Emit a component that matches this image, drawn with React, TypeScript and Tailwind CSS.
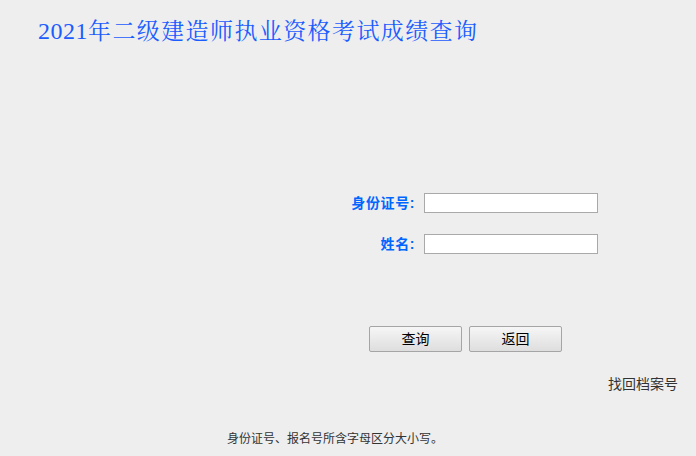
export default function App() {
  return (
    <div className="w-[696px] h-[456px] bg-[#eeeeee] overflow-hidden" style={{ fontFamily: '"Liberation Sans", "Noto Sans CJK SC", sans-serif' }}>
      <div className="pt-[16px] pl-[38px] h-[46px] leading-[30px] text-[#1a5cff] whitespace-nowrap" style={{ fontFamily: '"Liberation Serif", "Noto Serif CJK SC", "Noto Sans CJK SC", serif' }}>
        <span className="text-[24px] leading-[30px] tracking-[0.5px]">2021</span>
        <span className="text-[23px] leading-[30px] tracking-[1.4px]">年二级建造师执业资格考试成绩查询</span>
      </div>
      <div className="mt-[147px] flex flex-col gap-[21px]">
        <div className="flex items-center">
          <div className="w-[415px] text-right text-[14px] leading-[20px] font-bold tracking-[0.6px] text-[#0066ff]">身份证号:</div>
          <input className="ml-[9px] w-[174px] h-[20px] bg-white border border-[#a9a9a9] outline-none" />
        </div>
        <div className="flex items-center">
          <div className="w-[415px] text-right text-[14px] leading-[20px] font-bold tracking-[0.6px] text-[#0066ff]">姓名:</div>
          <input className="ml-[9px] w-[174px] h-[20px] bg-white border border-[#a9a9a9] outline-none" />
        </div>
      </div>
      <div className="mt-[72px] pl-[369px] flex gap-[7px]">
        <button className="w-[93px] h-[26px] text-[14px] text-black border border-[#a5a5a5] rounded-[2px] bg-gradient-to-b from-[#f6f6f6] to-[#dedede]">查询</button>
        <button className="w-[93px] h-[26px] text-[14px] text-black border border-[#a5a5a5] rounded-[2px] bg-gradient-to-b from-[#f6f6f6] to-[#dedede]">返回</button>
      </div>
      <div className="mt-[22px] pr-[18px] text-right text-[14px] leading-[20px] text-[#333333]">找回档案号</div>
      <div className="mt-[36px] pl-[227px] text-[12px] leading-[18px] text-[#333333]">身份证号、报名号所含字母区分大小写。</div>
    </div>
  );
}
